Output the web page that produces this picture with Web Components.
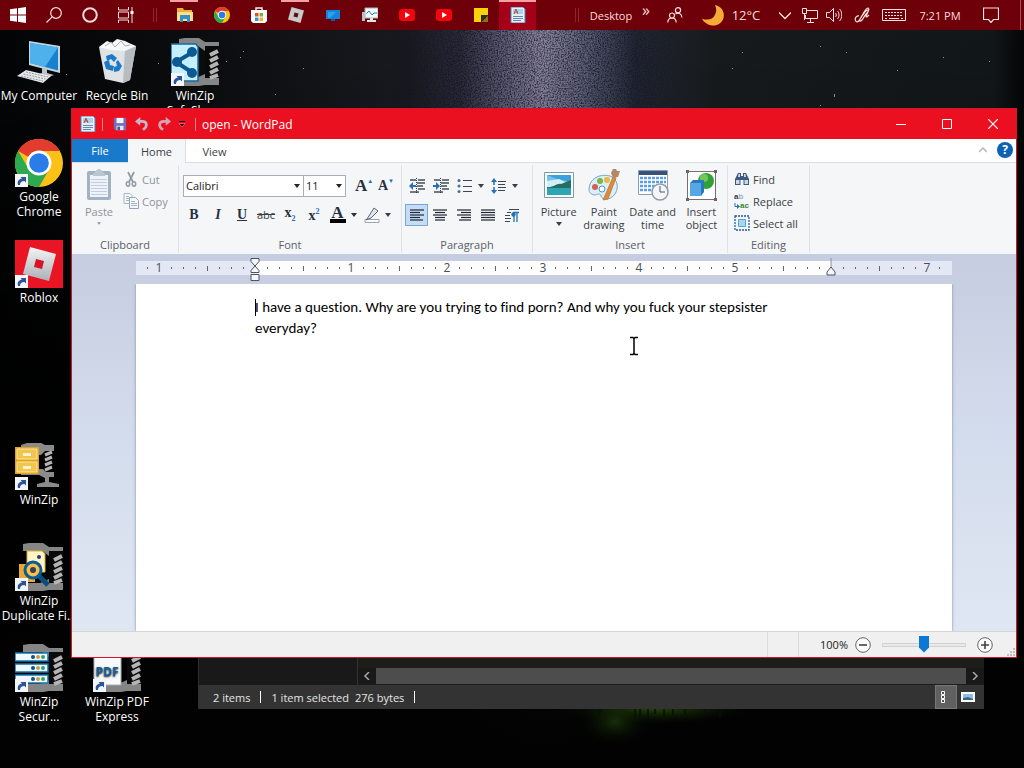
<!DOCTYPE html>
<html lang="en">
<head>
<meta charset="utf-8">
<title>Desktop</title>
<style>
  html, body { height: 100%; margin: 0; }
  body {
    background: #000;
    font-family: "Open Sans", "Noto Sans", sans-serif;
    font-size: 12px;
    line-height: 15px;
    overflow: hidden;
  }
</style>
</head>
<body>
<desktop-shell>
  <task-bar slot="taskbar"></task-bar>
  <desktop-icon icon="computer">My Computer</desktop-icon>
  <desktop-icon icon="bin">Recycle Bin</desktop-icon>
  <desktop-icon icon="zipshare" shortcut>WinZip<br>SafeShare</desktop-icon>
  <desktop-icon icon="chrome" shortcut style="grid-area: 2 / 1">Google<br>Chrome</desktop-icon>
  <desktop-icon icon="roblox" shortcut style="grid-area: 3 / 1">Roblox</desktop-icon>
  <desktop-icon icon="winzip" shortcut style="grid-area: 5 / 1">WinZip</desktop-icon>
  <desktop-icon icon="zipfind" shortcut style="grid-area: 6 / 1">WinZip<br>Duplicate Fi...</desktop-icon>
  <desktop-icon icon="zipsecure" shortcut style="grid-area: 7 / 1">WinZip<br>Secur...</desktop-icon>
  <desktop-icon icon="zippdf" shortcut style="grid-area: 7 / 2">WinZip PDF<br>Express</desktop-icon>
  <explorer-window slot="window"></explorer-window>
  <wordpad-window slot="window"></wordpad-window>
</desktop-shell>

<script>
const lines = (rows) => rows.map(([x, y, w]) => `<path d="M${x} ${y}h${w}"/>`).join("");

const vise = `<path d="M8 1 14 0H28L34 4H48V47H34L28 48H10V40H25L34 36V13L27 8H8z" fill="#858585"/>
  <path d="M34 8h14v32H34z" fill="#0a0a0a"/>
  <path d="M39 17l8-4M39 23l8-4M39 29l8-4M39 35l8-4M39 40l8-3" stroke="#b5b5b5" stroke-width="4"/>`;

const doc = `<path d="M1 0h12l2 2v14H1z" fill="#e4effa" stroke="#4c83b5"/>
  <path d="M3 2h10v5H3z" fill="#a9d2f0"/><path d="M4 7l2-5 2 5M5 5h3" stroke="#b4552d" fill="none"/>
  <path d="M3 9.500h10M3 11.500h10M3 13.500h8" stroke="#6686ad"/>`;

const chrome = `<circle cx="24" cy="24" r="24" fill="#fbc116"/>
  <path d="M3.200 12A24 24 0 0 1 44.800 12H24A12 12 0 0 0 13.600 18z" fill="#e33b2e"/>
  <path d="M3.200 12A24 24 0 0 0 24 48L34.400 30A12 12 0 0 1 13.600 30z" fill="#2da94f"/>
  <circle cx="24" cy="24" r="12.500" fill="#fff"/><circle cx="24" cy="24" r="9.800" fill="#2a7de9"/>`;

// name: [viewBox, markup]
const ICONS = {
  start: ["0 0 16 16", `<path d="M0 2.300 7 1.300V7.500H0zM8 1.200 16 0V7.500H8zM0 8.500h7v6.200L0 13.700zM8 8.500h8V16L8 14.800z" fill="#fff"/>`],
  search: ["0 0 16 16", `<circle cx="10" cy="6" r="5.300" fill="none" stroke="#ffdcdc" stroke-width="1.200"/><path d="M6.200 9.800 0.500 15.500" stroke="#ffdcdc" stroke-width="1.200"/>`],
  cortana: ["0 0 16 16", `<circle cx="8" cy="8" r="6.800" fill="none" stroke="#f4d9da" stroke-width="2"/>`],
  taskview: ["0 0 16 16", `<path d="M.5 0v3h10V0M.5 16v-3h10v3M.5 5h10v6H.5zM14 0v16" fill="none" stroke="#ffdcdc"/><path d="M12.500 4h3v3h-3z" fill="#fff"/>`],
  folder: ["0 0 16 16", `<path d="M0 1h6l1 2h8v11H0z" fill="#e9b03c"/><path d="M0 5h16v9H0z" fill="#ffdf87"/><path d="M3 8h10v7h-3v-3H6v3H3z" fill="#2f91cf"/>`],
  chrome: ["0 0 48 48", chrome],
  store: ["0 0 16 16", `<path d="M5 4V1h6v3" fill="none" stroke="#eee" stroke-width="1.500"/><path d="M0 3h16v11l-2 2H2l-2-2z" fill="#fff"/><path d="M4 6h3.500v3.500H4z" fill="#e74f2c"/><path d="M8.500 6H12v3.500H8.500z" fill="#78b52a"/><path d="M4 10.500h3.500V14H4z" fill="#2a9adb"/><path d="M8.500 10.500H12V14H8.500z" fill="#f2b32b"/>`],
  robloxsmall: ["0 0 16 16", `<path d="M3.500 0 16 3.500 12.500 16 0 12.500z" fill="#c9c9c9"/><path d="M6.500 5.500 10.500 6.500 9.500 10.500 5.500 9.500z" fill="#5b0d14"/>`],
  screen: ["0 0 16 16", `<path d="M1 3h14v9H1z" fill="#1683da"/><path d="M6 12h4v2H6z" fill="#0d5ea6"/><path d="M3 5h8l-6 6H3z" fill="#2f9ff0"/>`],
  monitor: ["0 0 16 16", `<path d="M0 5h3v9H0z" fill="#b8c4c9"/><path d="M3 1h13v10H3z" fill="#f2fafc" stroke="#a8b4b8"/><path d="M4.500 6.500 7 4l3 4 2-2h3" fill="none" stroke="#2488a8"/><path d="M8 11h3v2h3v2H5v-2h3z" fill="#dce4e8"/>`],
  youtube: ["0 0 16 16", `<rect y="2" width="16" height="12" rx="3" fill="#f4040c"/><path d="M6 5v6l5-3z" fill="#fff"/>`],
  note: ["0 0 16 16", `<path d="M1 1h14v8l-6 6H1z" fill="#fcd20a"/><path d="M8 8h7v1l-6 6H8z" fill="#2f2a22"/><path d="M15 9v6H9z" fill="#8d7313"/>`],
  doc: ["0 0 16 16", doc],
  people: ["0 0 16 16", `<g fill="none" stroke="#ffdcdc" stroke-width="1.200"><circle cx="5" cy="8.500" r="2.500"/><path d="M.8 15.500c.2-6 8.200-6 8.400 0"/><circle cx="11" cy="3.300" r="2.600"/><path d="M8.500 7c3-2 6-.5 6.500 3.500"/></g>`],
  moon: ["0 0 24 24", `<path d="M14 1C25 3 27 16 19 21.500 12 26 3 22 0 16c6 2 12 1 14-4 2-4 2-7 0-11z" fill="#f6a934"/>`],
  chevron: ["0 0 12 12", `<path d="M0 3.500 6 9.500 12 3.500" fill="none" stroke="#ffdcdc" stroke-width="1.300"/>`],
  network: ["0 0 16 16", `<path d="M5 3.500h10.500v8H3.500V8M8.500 12v3M5 15.500h7M.5 1.500h4v5h-4zM2.500 7v6" fill="none" stroke="#ffe1e1"/>`],
  speaker: ["0 0 16 16", `<path d="M.5 5.500h3l4-4v13l-4-4h-3zM9.500 6c1 1 1 3 0 4M11.500 4c2 2 2 6 0 8M13.500 2c3 3 3 9 0 12" fill="none" stroke="#ffe1e1"/>`],
  pen: ["0 0 16 16", `<path d="M5 9c-4-1-5 5-2 6 3 0 3-4 6-8 2-3 3-6 5-6 2 1 0 4-2 6l-4 6c-2 2-3 1-2-1l5-7c2-3 4-2 3 0l-2 4c0 2 2 0 3-1" fill="none" stroke="#ffe1e1" stroke-width="1.200"/>`],
  keyboard: ["0 0 24 14", `<path d="M.5 1.500h23v11H.5z" fill="none" stroke="#ffe1e1"/><path d="M3 4.500h18M3 7.500h18" stroke="#ffe1e1" stroke-dasharray="2 1"/><path d="M3 10.500h2M7 10.500h10M19 10.500h2" stroke="#ffe1e1"/>`],
  notice: ["0 0 16 16", `<path d="M.5 1h15v11.500h-5L8 15.500 5.500 12.500h-5z" fill="none" stroke="#ffe1e1" stroke-width="1.200"/>`],

  computer: ["0 0 48 48", `<path d="M14 3 45 8v27L14 27z" fill="#c5d6df"/><path d="M15 5 43 9.500v23L15 25z" fill="#1781cf"/><path d="M15 5 43 9.500 30 29 15 25z" fill="#4fb1ec"/>
    <path d="M27 30l5 1v4l7 2-8 3-9-3 5-2z" fill="#b9c3c8"/><path d="M2 38 11 32 36 38 28 45z" fill="#e7e9ea"/><path d="M6 38 28 43M8.500 36 30.500 41M11 34l22 5" stroke="#92989c" stroke-dasharray="2 1"/>`],
  bin: ["0 0 48 48", `<path d="M6 9 43 8 37 42 30 45 12 41z" fill="#dfe3e6"/><path d="M43 8 37 42 30 45 32 11z" fill="#b8bcc0"/>
    <path d="M6 9l8-6 5 2 5-4 8 2 4 2 7 3-11 5-14-1z" fill="#f7f8f8"/><path d="M12 8l6-4 4 5 6-6 4 5 5-1" fill="none" stroke="#aaafb3"/>
    <g fill="#1b7ac8"><path d="M13 18l6-2 5 4-3 4-3-3-4 2z"/><path d="M11 24l5-2 1 5 4 1-1 5-7-2z"/><path d="M25 22l4 6-3 5-5 1v-5l3-1-1-4z"/></g>`],
  zipshare: ["0 0 48 48", `${vise}<path d="M0 6h25l2 3v34H0z" fill="#c4efff" stroke="#146a9e" stroke-width="1.500"/><path d="M22 14 5 24 22 35" fill="none" stroke="#0c5a91" stroke-width="4"/><g fill="#0c5a91"><circle cx="21" cy="14" r="5"/><circle cx="6" cy="24" r="5"/><circle cx="21" cy="35" r="5"/></g>`],
  roblox: ["0 0 48 48", `<linearGradient id="r" x2="0" y2="1"><stop stop-color="#f4f4f4"/><stop offset="1" stop-color="#a9b0b6"/></linearGradient><path d="M0 0h48v48H0z" fill="#e91424"/><path d="M15 7 41 14 34 41 8 34z" fill="url(#r)"/><path d="M21 19 29 21 27 29 19 27z" fill="#d91323"/>`],
  winzip: ["0 0 48 48", `<path d="M6 3 12 1h14l4 2h9v6h-9l-4 4h-2v14h4l3 3h8v5h-5v5l10 2v3H22v-3l8-2v-4l-6-3H6z" fill="#8b8b8b"/><path d="M30 13l7-3M30 18l7-3M30 23l7-3M30 28l7-3" stroke="#b5b5b5" stroke-width="3"/>
    <path d="M0 5h24v27H0z" fill="#e0a51f"/><path d="M2 7h20v10H2zM2 20h20v10H2z" fill="#f2c552" stroke="#ffe69b"/><path d="M8 11h8v3H8zM8 24h8v3H8z" fill="#fff4cd"/>`],
  zipfind: ["0 0 48 48", `${vise}<path d="M12 8h15l3 3v18H12z" fill="#fff5c7" stroke="#d9b336"/><path d="M4 21h16v18H4z" fill="#e9a733"/><circle cx="24" cy="14" r="2" fill="#233b7c"/>
    <path d="M24 33l9 9" stroke="#0a4e80" stroke-width="5"/><circle cx="18" cy="27" r="8" fill="#f3c056" stroke="#0b5b91" stroke-width="3"/><circle cx="18" cy="27" r="3" fill="#3b3e47"/>`],
  zipsecure: ["0 0 48 48", `${vise}<g fill="#eefaff" stroke="#1673a8" stroke-width="1.500"><path d="M0 9h33v8H0zM0 20h33v8H0zM0 31h33v8H0z"/></g>
    <g fill="#164e83"><circle cx="18" cy="13" r="2"/><circle cx="18" cy="24" r="2"/><circle cx="18" cy="35" r="2"/></g><g fill="#c8a13c"><circle cx="23" cy="13" r="2"/><circle cx="23" cy="24" r="2"/><circle cx="23" cy="35" r="2"/></g><g fill="#35a06c"><circle cx="28" cy="13" r="2"/><circle cx="28" cy="24" r="2"/><circle cx="28" cy="35" r="2"/></g>`],
  zippdf: ["0 0 48 48", `${vise}<path d="M1 4h20l7 7v30H1z" fill="#f8fafb" stroke="#a9b0b5"/><text x="14" y="32" text-anchor="middle" font-family="Open Sans" font-weight="700" font-size="12" fill="#15609d">PDF</text>`],
  arrow: ["0 0 13 13", `<path d="M0 0h13v13H0z" fill="#f3f5f8"/><path d="M3 11c-1-4 1-6 4-6.500L5.500 3H11v5.500L9.500 7C6.500 7 5 8.500 5 11z" fill="#2b549b"/>`],

  save: ["0 0 16 16", `<path d="M1 1h14v14H3l-2-2z" fill="#6d70b8"/><path d="M4 1h8v6H4z" fill="#f5f3ff"/><path d="M4 10h8v5H4z" fill="#e6e4f2"/><path d="M5 11h3v4H5z" fill="#54509a"/>`],
  undo: ["0 0 16 16", `<path d="M4 5h4c6 0 7 6 1 9.500" fill="none" stroke="#cbb3c8" stroke-width="3"/><path d="M0 5 6 0v10z" fill="#cbb3c8"/>`],
  redo: ["0 0 16 16", `<path d="M12 5H8c-6 0-7 6-1 9.500" fill="none" stroke="#d3a5b4" stroke-width="3"/><path d="M16 5 10 0v10z" fill="#d3a5b4"/>`],
  more: ["0 0 8 8", `<path d="M1 1.500h6" stroke="#300"/><path d="M1 3.500h6L4 7z" fill="#200" stroke="#f6b6ba" stroke-width=".5"/>`],
  minimize: ["0 0 10 10", `<path d="M0 5.500h10" stroke="#fff"/>`],
  maximize: ["0 0 10 10", `<path d="M.5 .5h9v9h-9z" fill="none" stroke="#fff"/>`],
  close: ["0 0 10 10", `<path d="M0 0 10 10M10 0 0 10" stroke="#fff" stroke-width="1.200"/>`],
  up: ["0 0 8 8", `<path d="M0 6 4 2 8 6" fill="none" stroke="#b4b7ba" stroke-width="1.500"/>`],
  down: ["0 0 6 4", `<path d="M0 0h6L3 4z" fill="currentColor"/>`],
  paste: ["0 0 32 32", `<rect x="4" y="2" width="24" height="29" rx="2" fill="#a4b1c2"/><path d="M7 6h18v22H7z" fill="#eef3f9"/><path d="M10 5c2-1 3-5 6-5s4 4 6 5v2H10z" fill="#bbc6d3"/><path d="M8 10.500h16M8 13.500h16M8 16.500h16M8 19.500h16M8 22.500h16M8 25.500h16" stroke="#c3ccda"/>`],
  cut: ["0 0 16 16", `<path d="M5 1l5 10M11 1 6 11" stroke="#919ba6" stroke-width="1.700"/><g fill="none" stroke="#919ba6" stroke-width="1.500"><ellipse cx="5" cy="13" rx="1.700" ry="2.200"/><ellipse cx="11" cy="13" rx="1.700" ry="2.200"/></g>`],
  copy: ["0 0 16 16", `<path d="M1 .5h6l2 2v8H1z" fill="#f5f8fb" stroke="#a6b4c4"/><path d="M6.500 4.500h6l3 3v8h-9z" fill="#f5f8fb" stroke="#94a5b8"/><path d="M8 8.500h4M8 10.500h6M8 12.500h6M3 3.500h3M3 5.500h3M3 7.500h3" stroke="#a6b4c4"/>`],
  outdent: ["0 0 16 16", `<g stroke="#2b3443" stroke-width="1.300">${lines([[1, 2, 6], [9, 2, 7], [8, 5, 8], [8, 8, 6], [9, 11, 7], [1, 14, 9]])}</g><path d="M0 8l4-4v3h3v2H4v3z" fill="#2770b5"/><path d="M7.500 0v16" stroke="#2b3443" stroke-dasharray="1 1"/>`],
  indent: ["0 0 16 16", `<g stroke="#2b3443" stroke-width="1.300">${lines([[1, 2, 6], [9, 2, 7], [8, 5, 8], [8, 8, 6], [9, 11, 7], [1, 14, 9]])}</g><path d="M7 8 3 4v3H0v2h3v3z" fill="#2770b5"/><path d="M7.500 0v16" stroke="#2b3443" stroke-dasharray="1 1"/>`],
  bullets: ["0 0 16 16", `<g fill="#426ea1"><circle cx="2" cy="2.500" r="1.500"/><circle cx="2" cy="8" r="1.500"/><circle cx="2" cy="13.500" r="1.500"/></g><path d="M6 2.500h9M6 8.500h9M6 13.500h9" stroke="#3c4654"/>`],
  spacing: ["0 0 16 16", `<path d="M3 3v10" stroke="#2770b5" stroke-width="1.500" stroke-dasharray="4 2"/><path d="M0 4l3-4 3 4zM0 12l3 4 3-4z" fill="#2770b5"/><path d="M7 3.500h8M7 6.500h7M7 9.500h8M7 12.500h7" stroke="#3c4654"/>`],
  left: ["0 0 16 16", `<g stroke="#1f2733" stroke-width="1.200">${lines([[1, 3, 14], [1, 5.5, 10], [1, 8, 14], [1, 10.5, 10], [1, 13, 13]])}</g>`],
  center: ["0 0 16 16", `<g stroke="#1f2733" stroke-width="1.200">${lines([[1, 3, 14], [3, 5.5, 10], [1, 8, 14], [3, 10.5, 10], [3, 13, 10]])}</g>`],
  right: ["0 0 16 16", `<g stroke="#1f2733" stroke-width="1.200">${lines([[1, 3, 14], [5, 5.5, 10], [1, 8, 14], [5, 10.5, 10], [3, 13, 12]])}</g>`],
  justify: ["0 0 16 16", `<g stroke="#1f2733" stroke-width="1.200">${lines([[1, 3, 14], [1, 5.5, 14], [1, 8, 14], [1, 10.5, 14], [1, 13, 14]])}</g>`],
  paragraph: ["0 0 16 16", `<g stroke="#3c4654">${lines([[5, 2.5, 10], [3, 5.5, 4], [1, 8.5, 5], [1, 11.5, 6], [1, 14.5, 5]])}</g><path d="M10 15V6M13 15V6M15 5.500H9" stroke="#2770b5" stroke-width="1.300"/><circle cx="9.500" cy="7.500" r="2.200" fill="#2770b5"/>`],
  marker: ["0 0 16 16", `<path d="M1 12.500h14v3H1z" fill="#fff" stroke="#9ba2ab"/><path d="M3 12 10 1l4 3-7 7-5 2z" fill="#dfe6ee" stroke="#5d6773"/>`],
  picture: ["0 0 32 32", `<path d="M1.500 3.500h29v25h-29z" fill="#fff" stroke="#8198aa"/><path d="M4 6h24v20H4z" fill="#6fc3ec"/><path d="M4 6h24v7L14 10z" fill="#3ba0dd"/><path d="M4 12l12-2 12 6v2H4z" fill="#d4f0f7"/><path d="M4 18c6 1 10-4 14-3l10-4v8H4z" fill="#246f62"/><path d="M4 19h24v7H4z" fill="#2da6b4"/>`],
  paint: ["0 0 32 32", `<path d="M1 20C1 10 12 4 22 7c8 3 9 12 5 18-5 7-13 6-14 2s-4-1-7-1c-3-1-5-2-5-6z" fill="#d9effa" stroke="#7fa5bd"/><circle cx="7" cy="18" r="3" fill="#d85b55"/><circle cx="12" cy="12" r="3" fill="#7ab648"/><circle cx="19" cy="11" r="3" fill="#edb83f"/><circle cx="14" cy="20" r="3" fill="#fff" stroke="#4a93cc"/><path d="M15 31 25 8l3 1-8 21z" fill="#df8c3a" stroke="#b16321" stroke-width=".6"/><path d="M25 0h3l1 2 3 0-2 6-5 1-2-5z" fill="#b58762"/>`],
  date: ["0 0 32 32", `<path d="M1.500 1.500h29v24h-29z" fill="#fff" stroke="#8c9eb3"/><path d="M2 2h28v4H2z" fill="#385178"/><path d="M3 9h26M3 13h26M3 17h26M3 21h26" stroke="#5b9ee2" stroke-width="2.500" stroke-dasharray="3 1"/><circle cx="23" cy="23" r="8" fill="#f4f6f8" stroke="#929ba5" stroke-width="1.500"/><path d="M23 17v6h5" fill="none" stroke="#4b5865"/>`],
  object: ["0 0 32 32", `<path d="M2.500 2.500h28v28h-28z" fill="#fff" stroke="#78706e"/><g fill="#7a5f5f"><path d="M1 1h3v3H1zM29 1h3v3h-3zM1 29h3v3H1zM29 29h3v3h-3z"/></g><circle cx="21" cy="12" r="8" fill="#2fa136"/><circle cx="19" cy="9" r="4" fill="#70c75c"/><path d="M5 14l3-3h11v12l-3 4H5z" fill="#2b79bd"/><path d="M5 14h11v13H5z" fill="#58a7e5"/>`],
  find: ["0 0 16 16", `<path d="M4 2h3v3h2V2h3l3 6v6H9.500V9h-3v5H1V8z" fill="#3f587e"/><path d="M2 9h3.500v4H2zM10.500 9H14v4h-3.500zM4.500 3h1.500v3H4zM10 3h1.500l.5 3h-2z" fill="#c9d8ea"/>`],
  turn: ["0 0 6 6", `<path d="M1 0v3.500h3" fill="none" stroke="#2770b5"/><path d="M3 1l3 2.500L3 6z" fill="#2770b5"/>`],
  selectall: ["0 0 16 16", `<path d="M1 1h14v14H1z" fill="none" stroke="#235ba0" stroke-width="1.300" stroke-dasharray="2 1"/><path d="M4.500 4.500h7v7h-7z" fill="#a5d8f5" stroke="#5aa4d5"/>`],
  scrollleft: ["0 0 8 8", `<path d="M6 0 2 4l4 4" fill="none" stroke="#a9a9a9" stroke-width="1.500"/>`],
  scrollright: ["0 0 8 8", `<path d="M2 0l4 4-4 4" fill="none" stroke="#a9a9a9" stroke-width="1.500"/>`],
  details: ["0 0 12 12", `<path d="M1.500 .5h3v3h-3zM1.500 4.500h3v3h-3zM1.500 8.500h3v3h-3z" fill="#555" stroke="#fff"/>`],
  thumbs: ["0 0 14 12", `<path d="M0 1h14v10H0z" fill="#fff"/><path d="M2 3h10v6H2z" fill="#8cbdf0"/><path d="M2 7l5-1 5 2v1H2z" fill="#3d6478"/>`],
  minus: ["0 0 16 16", `<circle cx="8" cy="8" r="7.300" fill="#fbfbfb" stroke="#666"/><path d="M4 8h8" stroke="#444" stroke-width="1.600"/>`],
  plus: ["0 0 16 16", `<circle cx="8" cy="8" r="7.300" fill="#fbfbfb" stroke="#666"/><path d="M4 8h8M8 4v8" stroke="#444" stroke-width="1.600"/>`],
  grip: ["0 0 10 10", `<path d="M7 1h2v2H7zM4 4h2v2H4zM7 4h2v2H7zM1 7h2v2H1zM4 7h2v2H4zM7 7h2v2H7z" fill="#bfbfbf"/>`],
  firstline: ["0 0 10 24", `<path d="M1 .5h8v3L5 8 1 3.500zM5 8l4 4.500v2H1v-2zM1 16.500h8v6H1z" fill="#f4f7fb" stroke="#4a5360"/>`],
  rightmark: ["0 0 10 24", `<path d="M5 0v9" stroke="#8a929d"/><path d="M5 9l4 5v3H1v-3z" fill="#f4f7fb" stroke="#4a5360"/>`]
};

class BaseElement extends HTMLElement {
  connectedCallback() {
    if (this.shadowRoot) return;
    const template = document.createElement("template");
    template.innerHTML = this.render();
    this.attachShadow({mode: "open"});
    this.shadowRoot.appendChild(template.content.cloneNode(true));
  }
}

class UiIcon extends BaseElement {
  render() {
    const [box, markup] = ICONS[this.getAttribute("name")];
    const [, , w, h] = box.split(" ");
    const width = this.getAttribute("width") || w;
    const height = this.getAttribute("height") || Math.round(width * h / w);
    return `<style>:host { display: block; flex: none; } svg { display: block; }</style>
      <svg width="${width}" height="${height}" viewBox="${box}" aria-hidden="true">${markup}</svg>`;
  }
}

class DesktopShell extends BaseElement {
  render() {
    return `
    <style>
      :host { display: flex; flex-direction: column; height: 100vh; position: relative; isolation: isolate; }
      .wallpaper { position: absolute; inset: 0; width: 100%; height: 100%; z-index: -1; }
      main {
        flex: 1; min-height: 0; position: relative;
        display: grid; grid-template-columns: repeat(auto-fill, 78px); grid-auto-rows: 101px;
      }
    </style>
    <svg class="wallpaper" viewBox="0 0 1024 768" preserveAspectRatio="xMidYMin slice" aria-hidden="true">
      <defs>
        <linearGradient id="sky">
          <stop offset="0" stop-color="#030405"/><stop offset=".2" stop-color="#0b0d0f"/>
          <stop offset=".4" stop-color="#191b21"/><stop offset=".45" stop-color="#2c2d37"/>
          <stop offset=".49" stop-color="#626072"/><stop offset=".53" stop-color="#8e899f"/>
          <stop offset=".57" stop-color="#626577"/><stop offset=".62" stop-color="#242832"/>
          <stop offset=".7" stop-color="#171b1e"/><stop offset=".97" stop-color="#121719"/>
          <stop offset="1" stop-color="#040606"/>
        </linearGradient>
        <linearGradient id="fade" x2="0" y2="1">
          <stop offset="0" stop-color="#000" stop-opacity="0"/><stop offset=".15" stop-color="#000" stop-opacity=".1"/>
          <stop offset=".5" stop-color="#000" stop-opacity=".9"/><stop offset="1" stop-color="#020202"/>
        </linearGradient>
        <radialGradient id="grass"><stop offset="0" stop-color="#264a0b"/><stop offset="1" stop-color="#0a1503" stop-opacity="0"/></radialGradient>
        <linearGradient id="band"><stop offset="0" stop-color="#000"/><stop offset=".3" stop-color="#fff"/><stop offset=".7" stop-color="#fff"/><stop offset="1" stop-color="#000"/></linearGradient>
        <mask id="way"><path d="M390 30h300v80H390z" fill="url(#band)"/></mask>
        <filter id="grain" x="0" y="0" width="1" height="1">
          <feTurbulence type="fractalNoise" baseFrequency=".7" numOctaves="2" seed="4"/>
          <feColorMatrix values="0 0 0 0 0  0 0 0 0 0  0 0 0 0 .02  1.6 0 0 0 -.6"/>
        </filter>
      </defs>
      <path d="M0 0h1024v768H0z" fill="url(#sky)"/>
      <g mask="url(#way)"><path d="M390 30h300v80H390z" filter="url(#grain)"/></g>
      <path d="M0 0h1024v768H0z" fill="url(#fade)"/>
      <g fill="#8b9190"><path d="M243 51h1v1h-1zM240 57h1v1h-1zM303 68h1v1h-1zM275 94h1v1h-1zM570 52h1v1h-1zM732 68h1v1h-1zM742 52h1v1h-1zM820 46h1v1h-1zM846 52h1v1h-1zM834 94h1v3h-1zM820 105h1v1h-1zM943 57h1v1h-1zM989 61h1v1h-1zM897 70h1v1h-1zM66 74h1v1h-1zM158 63h1v1h-1zM226 61h1v1h-1z"/></g>
      <ellipse cx="655" cy="708" rx="95" ry="16" fill="url(#grass)"/>
      <ellipse cx="615" cy="722" rx="34" ry="22" fill="url(#grass)" opacity=".6"/>
      <path d="M588 708l6 8M598 716l3-8M635 708v10M640 708v8M648 708v11M655 708v6M664 708v9M673 708v7M685 708v6M705 708v8M720 708v10" stroke="#071003" stroke-width="1.500"/>
    </svg>
    <slot name="taskbar"></slot>
    <main><slot></slot></main>
    <slot name="window"></slot>`;
  }
}

class DesktopIcon extends BaseElement {
  render() {
    return `
    <style>
      :host { display: block; color: #fff; text-align: center; white-space: nowrap; }
      a { display: flex; flex-direction: column; align-items: center; gap: 2px; padding-top: 8px; color: inherit; text-decoration: none; text-shadow: 0 1px 2px #000; }
      .art { display: grid; }
      .art ui-icon { grid-area: 1 / 1; }
      .badge { place-self: end start; }
    </style>
    <a href="#">
      <span class="art">
        <ui-icon name="${this.getAttribute("icon")}" width="48"></ui-icon>
        ${this.hasAttribute("shortcut") ? '<ui-icon class="badge" name="arrow"></ui-icon>' : ""}
      </span>
      <span><slot></slot></span>
    </a>`;
  }
}

class TaskButton extends BaseElement {
  render() {
    return `
    <style>
      :host { display: block; width: 37px; }
      button {
        width: 100%; height: 100%; padding: 0; border: 0; border-top: 2px solid transparent; border-bottom: 2px solid transparent;
        background: none; color: #ffdcdc; font: inherit; white-space: nowrap;
        display: flex; align-items: center; justify-content: center; gap: 8px;
      }
      :host([open]) button { border-image: linear-gradient(90deg, transparent 4px, #f5a0a5 4px calc(100% - 5px), transparent calc(100% - 5px)) 2 0 0 0; }
      :host([active]) button { background: #a4001a; border-top-color: #f5a0a5; border-bottom-color: #a4001a; }
    </style>
    <button type="button" aria-label="${this.getAttribute("label") || this.textContent}">
      ${this.hasAttribute("icon") ? `<ui-icon name="${this.getAttribute("icon")}" width="${this.getAttribute("size") || 16}"></ui-icon>` : ""}
      <slot></slot>
    </button>`;
  }
}

class TaskBar extends BaseElement {
  render() {
    return `
    <style>
      :host { display: flex; height: 30px; background: #6d0009; color: #ffdcdc; font-size: 11px; }
      .sep { width: 22px; display: grid; place-items: center; }
      .sep::before { content: ""; width: 2px; height: 14px; border: solid #93242c; border-width: 0 1px; }
      .space { flex: 1; }
      .w10 { width: 10px; } .w24 { width: 24px; } .w26 { width: 26px; } .w32 { width: 32px; } .w36 { width: 36px; }
      .w42 { width: 42px; } .w46 { width: 46px; } .w58 { width: 58px; } .w60 { width: 60px; }
      .weather { width: 66px; margin-right: 8px; font-size: 13px; }
      .more { width: 12px; font-size: 16px; padding-bottom: 10px; }
      .edge { width: 8px; border-right: 1px solid #a9505a; margin-right: 3px; }
    </style>
    <task-button class="w36" icon="start" label="Start"></task-button>
    <task-button class="w36" icon="search" label="Search"></task-button>
    <task-button class="w36" icon="cortana" label="Cortana"></task-button>
    <task-button class="w36" icon="taskview" label="Task view"></task-button>
    <span class="sep"></span>
    <task-button icon="folder" label="File Explorer" open></task-button>
    <task-button icon="chrome" label="Chrome"></task-button>
    <task-button icon="store" label="Store"></task-button>
    <task-button icon="robloxsmall" label="Roblox" open></task-button>
    <task-button icon="screen" label="Remote screen"></task-button>
    <task-button icon="monitor" label="Monitor"></task-button>
    <task-button icon="youtube" label="YouTube"></task-button>
    <task-button icon="youtube" label="YouTube"></task-button>
    <task-button icon="note" label="Sticky Notes"></task-button>
    <task-button icon="doc" label="WordPad" active></task-button>
    <span class="space"></span>
    <span class="sep w10"></span>
    <task-button class="w58">Desktop</task-button>
    <task-button class="more">»</task-button>
    <task-button class="w46" icon="people" label="People"></task-button>
    <task-button class="weather" icon="moon" size="22">12°C</task-button>
    <task-button class="w26" icon="chevron" size="12" label="Hidden icons"></task-button>
    <task-button class="w24" icon="network" label="Network"></task-button>
    <task-button class="w24" icon="speaker" label="Volume"></task-button>
    <task-button class="w32" icon="pen" label="Ink"></task-button>
    <task-button class="w32" icon="keyboard" size="24" label="Keyboard"></task-button>
    <task-button class="w60">7:21 PM</task-button>
    <task-button class="w42" icon="notice" label="Notifications"></task-button>
    <span class="edge"></span>`;
  }
}

class ExplorerWindow extends BaseElement {
  render() {
    return `
    <style>
      :host {
        position: absolute; left: 198px; right: 40px; bottom: 59px; height: 200px;
        display: flex; flex-direction: column; background: #191919; color: #e6e6e6; font-size: 11px;
        border-left: 1px solid #303030; box-sizing: border-box;
      }
      .body { flex: 1; display: flex; }
      nav { width: 158px; border-right: 1px solid #333; }
      .files { flex: 1; display: flex; flex-direction: column; justify-content: flex-end; background: #1c1c19; }
      .scroll { display: flex; align-items: center; height: 16px; background: #191919; margin-bottom: 1px; }
      .scroll ui-icon { margin: 0 5px; }
      .thumb { flex: 1; align-self: stretch; background: #4d4d4d; }
      footer { display: flex; align-items: center; height: 24px; background: #333; padding-left: 14px; }
      .bar { width: 1px; height: 12px; background: #fff; margin: 0 10px; }
      .gap { margin-left: 6px; }
      footer button { width: 22px; height: 24px; padding: 0; border: 0; background: none; display: grid; place-items: center; }
      footer button.on { margin-left: auto; background: #606060; border: 1px solid #777; }
      footer button:last-child { margin-right: 5px; }
    </style>
    <div class="body">
      <nav></nav>
      <div class="files"><div class="scroll"><ui-icon name="scrollleft"></ui-icon><span class="thumb"></span><ui-icon name="scrollright"></ui-icon></div></div>
    </div>
    <footer>
      <span>2 items</span><span class="bar"></span><span>1 item selected</span><span class="gap">276 bytes</span><span class="bar"></span>
      <button type="button" class="on" aria-label="Details"><ui-icon name="details"></ui-icon></button>
      <button type="button" aria-label="Thumbnails"><ui-icon name="thumbs"></ui-icon></button>
    </footer>`;
  }
}

class RibbonGroup extends BaseElement {
  render() {
    return `
    <style>
      :host { display: flex; flex-direction: column; box-sizing: border-box; border-right: 1px solid #e0e3e6; margin: 2px 0 1px; color: #5c6066; }
      .body { flex: 1; padding: 3px 3px 0; color: #3b3f45; }
      .title { text-align: center; line-height: 16px; }
    </style>
    <div class="body"><slot></slot></div>
    <div class="title">${this.getAttribute("label")}</div>`;
  }
}

class RulerBar extends BaseElement {
  render() {
    let cells = "";
    for (let i = -9; i <= 57; i++) {
      let mark = "<i></i>";
      if (i % 8 === 0) mark = i === 0 || i === 48 ? "" : Math.abs(i / 8);
      else if (i % 4 === 0) mark = '<i class="half"></i>';
      cells += `<span>${mark}</span>`;
    }
    return `
    <style>
      :host { display: flex; justify-content: center; height: 30px; font-size: 12px; }
      .ruler {
        position: relative; box-sizing: border-box; width: 816px; height: 14px; margin-top: 7px; padding-left: 5px; display: flex;
        background: linear-gradient(90deg, #e3e8f4 119px, #fdfdfe 119px 695px, #e3e8f4 695px); color: #4a4f57;
      }
      span { width: 12px; height: 14px; line-height: 14px; display: grid; place-items: center; }
      i { width: 1px; height: 2px; background: #5e646d; }
      .half { height: 5px; }
      .mark { position: absolute; top: -3px; left: 114px; }
      .end { left: 690px; }
    </style>
    <div class="ruler">${cells}<ui-icon class="mark" name="firstline"></ui-icon><ui-icon class="mark end" name="rightmark"></ui-icon></div>`;
  }
}

class WordpadWindow extends BaseElement {
  render() {
    return `
    <style>
      :host {
        position: absolute; left: 71px; right: 7px; top: 108px; bottom: 110px;
        display: flex; flex-direction: column; border: 1px solid #d3152d; box-sizing: border-box; background: #f5f6f7; font-size: 11px;
      }
      button { padding: 0; border: 0; background: none; color: inherit; font: inherit; line-height: 13px; display: flex; align-items: center; justify-content: center; }
      header { display: flex; align-items: center; height: 30px; background: #ea1020; color: #fff; padding-left: 8px; font-size: 12px; }
      header .sep { width: 1px; height: 13px; background: #f5868d; margin: 0 6px; }
      header .quick { width: 22px; height: 22px; }
      header .quick.small { width: 14px; }
      header .win { width: 46px; height: 30px; }
      header .title { flex: 1; }
      .tabs { display: flex; height: 23px; background: #fff; color: #3b3f45; border-bottom: 1px solid #dcdfe2; }
      .tabs button { width: 57px; height: 24px; }
      .tabs .file { width: 56px; height: 23px; background: #1979ca; color: #fff; }
      .tabs .home { width: 58px; background: #f5f6f7; box-sizing: border-box; border-right: 1px solid #dcdfe2; }
      .tabs .icon { width: 22px; height: 22px; }
      .tabs .fill { flex: 1; }
      .help span { width: 16px; height: 16px; line-height: 16px; border-radius: 8px; background: #0d62b5; color: #fff; font-weight: 700; font-size: 12px; }
      .ribbon { display: flex; height: 91px; background: #f5f6f7; }
      .clip { width: 107px; } .font { width: 223px; } .para { width: 131px; } .insert { width: 195px; } .edit { width: 82px; }
      .row { display: flex; align-items: center; height: 29px; margin-top: 3px; }
      .row + .row { margin-top: 0; }
      .cols { display: flex; }
      .off { color: #8e9399; }
      .big { flex-direction: column; gap: 4px; justify-content: flex-start; width: 46px; padding-top: 1px; white-space: nowrap; }
      .big.wide { width: 53px; }
      .paste { margin: 0 1px; }
      .item { height: 22px; gap: 3px; justify-content: flex-start; }
      .edit .item { margin-left: 3px; }
      .tool { width: 24px; height: 22px; gap: 2px; }
      .tool.drop { width: 34px; gap: 5px; }
      .tool.on { width: 23px; box-sizing: border-box; background: #c5dcf5; border: 1px solid #7aa7da; }
      .combo { position: relative; display: flex; margin-left: 1px; }
      .combo + .combo { margin-left: 0; }
      .combo ui-icon { position: absolute; right: 4px; top: 9px; pointer-events: none; color: #222; }
      select { appearance: none; box-sizing: border-box; height: 22px; padding: 0 2px; border: 1px solid #abadb3; border-radius: 0; background: #fff; color: #222; font: inherit; }
      .family { width: 121px; } .size { width: 43px; margin-left: -1px; }
      .sizes { display: flex; padding-left: 7px; }
      .serif { font-family: "Liberation Serif", serif; font-weight: 700; font-size: 14px; color: #27313f; }
      .serif sup, .serif sub { font-size: 8px; line-height: 8px; color: #2770b5; }
      .sizes .tool { width: 22px; gap: 0; }
      .serif .grow { font-size: 17px; } .serif .tri { font-size: 6px; line-height: 12px; align-self: flex-start; color: #2770b5; }
      .serif .ink { border-bottom: 4px solid #000; width: 16px; line-height: 13px; font-size: 17px; }
      .swap { width: 16px; text-align: left; font: 700 8px/9px "Liberation Sans", sans-serif; color: #2c3f58; }
      .swap span { display: flex; align-items: center; color: #388532; }
      .swap u { text-decoration: none; color: #a2afbd; }
      .work { flex: 1; min-height: 0; display: flex; flex-direction: column; background: linear-gradient(#c6cde0, #c9cfe2 30px, #d3dcec 180px, #dfe7f3); }
      .sheet { position: relative; flex: 1; min-height: 0; width: 100%; max-width: 816px; align-self: center; display: flex; background: #fff; box-shadow: 0 0 3px #7f8ca5; clip-path: inset(0 -4px); }
      textarea {
        flex: 1; box-sizing: border-box; border: 0; outline: 0; resize: none; overflow: hidden; background: none; color: #000;
        padding: 13px 128px 0 119px; font: 15px/21px Carlito, Lato, sans-serif; font-variant-ligatures: none;
      }
      .caret { position: absolute; left: 119px; top: 15px; width: 1px; height: 17px; background: #000; }
      .pointer { position: absolute; left: 493px; top: 52px; }
      footer { display: flex; align-items: center; height: 26px; box-sizing: border-box; border-top: 1px solid #d5d5d5; background: #f0f0f0; color: #222; }
      footer .pane { width: 30px; height: 25px; border: solid #dcdcdc; border-width: 0 1px; margin-left: auto; }
      footer label { padding: 0 7px 0 21px; }
      footer ui-icon.grip { align-self: flex-end; margin-left: 13px; }
      input { appearance: none; width: 84px; height: 18px; margin: 0 11px; background: none; }
      input::-webkit-slider-runnable-track { height: 4px; box-sizing: border-box; border: 1px solid #d2d2d2; background: #e9e9e9; }
      input::-webkit-slider-thumb { appearance: none; width: 10px; height: 17px; margin-top: -8px; background: #0a78d4; clip-path: polygon(0 0, 100% 0, 100% 70%, 50% 100%, 0 70%); }
    </style>
    <header>
      <ui-icon name="doc"></ui-icon><span class="sep"></span>
      <button type="button" class="quick" aria-label="Save"><ui-icon name="save" width="14"></ui-icon></button>
      <button type="button" class="quick" aria-label="Undo"><ui-icon name="undo" width="14"></ui-icon></button>
      <button type="button" class="quick" aria-label="Redo"><ui-icon name="redo" width="14"></ui-icon></button>
      <button type="button" class="quick small" aria-label="Customize"><ui-icon name="more"></ui-icon></button>
      <span class="sep"></span><span class="title">open - WordPad</span>
      <button type="button" class="win" aria-label="Minimize"><ui-icon name="minimize"></ui-icon></button>
      <button type="button" class="win" aria-label="Maximize"><ui-icon name="maximize"></ui-icon></button>
      <button type="button" class="win" aria-label="Close"><ui-icon name="close"></ui-icon></button>
    </header>
    <div class="tabs">
      <button type="button" class="file">File</button>
      <button type="button" class="home">Home</button>
      <button type="button">View</button>
      <span class="fill"></span>
      <button type="button" class="icon" aria-label="Collapse"><ui-icon name="up"></ui-icon></button>
      <button type="button" class="icon help" aria-label="Help"><span>?</span></button>
    </div>
    <div class="ribbon">
      <ribbon-group class="clip" label="Clipboard">
        <div class="cols off">
          <button type="button" class="big paste"><ui-icon name="paste"></ui-icon>Paste<ui-icon name="down" width="4"></ui-icon></button>
          <div>
            <button type="button" class="item"><ui-icon name="cut"></ui-icon>Cut</button>
            <button type="button" class="item"><ui-icon name="copy"></ui-icon>Copy</button>
          </div>
        </div>
      </ribbon-group>
      <ribbon-group class="font" label="Font">
        <div class="row">
          <span class="combo"><select class="family" aria-label="Font family"><option>Calibri</option></select><ui-icon name="down"></ui-icon></span>
          <span class="combo"><select class="size" aria-label="Font size"><option>11</option></select><ui-icon name="down"></ui-icon></span>
          <span class="sizes">
            <button type="button" class="tool serif" aria-label="Grow font"><span class="grow">A</span><span class="tri">▲</span></button>
            <button type="button" class="tool serif" aria-label="Shrink font"><span>A</span><span class="tri">▼</span></button>
          </span>
        </div>
        <div class="row">
          <button type="button" class="tool serif">B</button>
          <button type="button" class="tool serif"><em>I</em></button>
          <button type="button" class="tool serif"><u>U</u></button>
          <button type="button" class="tool"><s>abc</s></button>
          <button type="button" class="tool serif"><span>x<sub>2</sub></span></button>
          <button type="button" class="tool serif"><span>x<sup>2</sup></span></button>
          <button type="button" class="tool drop serif" aria-label="Text color"><span class="ink">A</span><ui-icon name="down"></ui-icon></button>
          <button type="button" class="tool drop" aria-label="Highlight"><ui-icon name="marker"></ui-icon><ui-icon name="down"></ui-icon></button>
        </div>
      </ribbon-group>
      <ribbon-group class="para" label="Paragraph">
        <div class="row">
          <button type="button" class="tool" aria-label="Decrease indent"><ui-icon name="outdent"></ui-icon></button>
          <button type="button" class="tool" aria-label="Increase indent"><ui-icon name="indent"></ui-icon></button>
          <button type="button" class="tool drop" aria-label="Bullets"><ui-icon name="bullets"></ui-icon><ui-icon name="down"></ui-icon></button>
          <button type="button" class="tool drop" aria-label="Line spacing"><ui-icon name="spacing"></ui-icon><ui-icon name="down"></ui-icon></button>
        </div>
        <div class="row">
          <button type="button" class="tool on" aria-label="Align left"><ui-icon name="left"></ui-icon></button>
          <button type="button" class="tool" aria-label="Center"><ui-icon name="center"></ui-icon></button>
          <button type="button" class="tool" aria-label="Align right"><ui-icon name="right"></ui-icon></button>
          <button type="button" class="tool" aria-label="Justify"><ui-icon name="justify"></ui-icon></button>
          <button type="button" class="tool" aria-label="Paragraph"><ui-icon name="paragraph"></ui-icon></button>
        </div>
      </ribbon-group>
      <ribbon-group class="insert" label="Insert">
        <div class="cols">
          <button type="button" class="big"><ui-icon name="picture"></ui-icon>Picture<ui-icon name="down"></ui-icon></button>
          <button type="button" class="big"><ui-icon name="paint"></ui-icon><span>Paint<br>drawing</span></button>
          <button type="button" class="big wide"><ui-icon name="date"></ui-icon><span>Date and<br>time</span></button>
          <button type="button" class="big"><ui-icon name="object"></ui-icon><span>Insert<br>object</span></button>
        </div>
      </ribbon-group>
      <ribbon-group class="edit" label="Editing">
        <button type="button" class="item"><ui-icon name="find"></ui-icon>Find</button>
        <button type="button" class="item"><span class="swap">a<u>b</u><span><ui-icon name="turn"></ui-icon>ac</span></span>Replace</button>
        <button type="button" class="item"><ui-icon name="selectall"></ui-icon>Select all</button>
      </ribbon-group>
    </div>
    <div class="work">
      <ruler-bar></ruler-bar>
      <div class="sheet">
        <textarea aria-label="Document" spellcheck="false">I have a question. Why are you trying to find porn? And why you fuck your stepsister everyday?</textarea>
        <span class="caret"></span>
        <svg class="pointer" width="10" height="20" viewBox="0 0 10 20" aria-hidden="true"><path d="M1 1.500h3l1 1 1-1h3M1 18.500h3l1-1 1 1h3M5 2v16" fill="none" stroke="#000" stroke-width="1.500"/></svg>
      </div>
    </div>
    <footer>
      <span class="pane"></span>
      <label for="zoom">100%</label>
      <button type="button" aria-label="Zoom out"><ui-icon name="minus"></ui-icon></button>
      <input id="zoom" type="range" min="0" max="200" value="100">
      <button type="button" aria-label="Zoom in"><ui-icon name="plus"></ui-icon></button>
      <ui-icon class="grip" name="grip"></ui-icon>
    </footer>`;
  }
}

customElements.define("ui-icon", UiIcon);
customElements.define("desktop-shell", DesktopShell);
customElements.define("desktop-icon", DesktopIcon);
customElements.define("task-button", TaskButton);
customElements.define("task-bar", TaskBar);
customElements.define("explorer-window", ExplorerWindow);
customElements.define("ribbon-group", RibbonGroup);
customElements.define("ruler-bar", RulerBar);
customElements.define("wordpad-window", WordpadWindow);
</script>
</body>
</html>
